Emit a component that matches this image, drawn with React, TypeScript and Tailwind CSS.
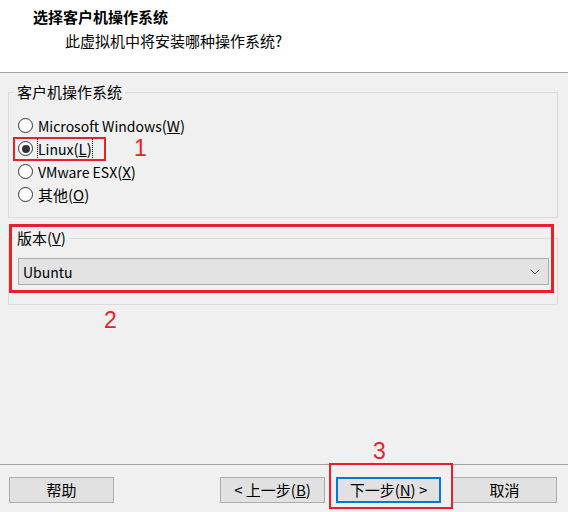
import React from "react"

const font = { fontFamily: '"Noto Sans CJK SC", "Noto Sans", sans-serif' }
const digit = { fontFamily: '"Liberation Sans", sans-serif' }

function Radio({ checked }: { checked?: boolean }) {
    return (
        <span className="flex h-[15px] w-[15px] items-center justify-center rounded-full border border-[#333333] bg-white">
            {checked && <span className="h-[8px] w-[8px] rounded-full bg-[#333333]" />}
        </span>
    )
}

// latin runs of the label are set a bit smaller, closer to the Windows UI font
function Lt({ children }: { children: React.ReactNode }) {
    return <span className="text-[14px]">{children}</span>
}

function Button({ children, primary }: { children: React.ReactNode; primary?: boolean }) {
    return (
        <div
            className={
                "flex h-[26px] w-[105px] items-center justify-center bg-[#e1e1e1] text-[15px] leading-[20px] text-black " +
                (primary ? "border-2 border-[#0078d7]" : "border border-[#adadad]")
            }
        >
            {children}
        </div>
    )
}

export default function App() {
    return (
        <div className="flex h-[512px] w-[568px] flex-col bg-[#f0f0f0] text-black" style={font}>
            {/* header */}
            <div className="h-[73px] border-b border-[#a0a0a0] bg-white pl-[33px] pt-[7px]">
                <div className="text-[15px] font-bold leading-[20px]">选择客户机操作系统</div>
                <div className="mt-[4px] pl-[32px] text-[15px] leading-[20px]">此虚拟机中将安装哪种操作系统?</div>
            </div>

            {/* body */}
            <div className="flex-1 pl-[8px] pr-[10px] text-[15px] leading-[20px]">
                <fieldset className="mt-[9px] border border-[#dcdcdc] pb-[11px] pl-[9px]">
                    <legend className="ml-[-4px] px-[3px]">客户机操作系统</legend>
                    <div className="flex flex-col pt-[12px]">
                        <div className="flex h-[23px] items-center gap-[5px]">
                            <Radio />
                            <span><Lt>Microsoft Windows</Lt>(<u>W</u>)</span>
                        </div>
                        <div className="relative flex h-[23px] items-center gap-[5px]">
                            <Radio checked />
                            <span className="outline outline-1 outline-dotted outline-black"><Lt>Linux</Lt>(<u>L</u>)</span>
                            <span className="pointer-events-none absolute left-[-5px] top-0 h-[24px] w-[93px] border-2 border-[#e8202a]" />
                            <span className="absolute left-[116px] top-[2px] text-[23px] leading-[18px] text-[#e8202a]" style={digit}>1</span>
                        </div>
                        <div className="flex h-[23px] items-center gap-[5px]">
                            <Radio />
                            <span><Lt>VMware ESX</Lt>(<u>X</u>)</span>
                        </div>
                        <div className="flex h-[23px] items-center gap-[5px]">
                            <Radio />
                            <span>其他(<u>O</u>)</span>
                        </div>
                    </div>
                </fieldset>

                <div className="relative mt-[10px]">
                    <fieldset className="border border-[#dcdcdc] pb-[19px] pl-[9px] pr-[8px]">
                        <legend className="ml-[-4px] px-[3px]">版本(<u>V</u>)</legend>
                        <div className="mt-[10px] flex h-[27px] items-center justify-between border border-[#adadad] bg-[#e3e3e3] pl-[4px] pr-[8px]">
                            <Lt>Ubuntu</Lt>
                            <svg width="10" height="6" viewBox="0 0 10 6" fill="none" stroke="#555" strokeWidth="1">
                                <path d="M0.5 0.5 L5 5 L9.5 0.5" />
                            </svg>
                        </div>
                    </fieldset>
                    <span className="pointer-events-none absolute left-[1px] right-[4px] top-[-4px] bottom-[12px] border-[3px] border-[#e8202a]" />
                    <span className="absolute left-[96px] top-[83px] text-[23px] leading-[18px] text-[#e8202a]" style={digit}>2</span>
                </div>
            </div>

            {/* footer */}
            <div className="flex h-[48px] items-start justify-between border-t border-[#a0a0a0] pl-[9px] pr-[11px] pt-[12px]">
                <Button>帮助</Button>
                <div className="flex gap-[11px]">
                    <Button>&lt; 上一步(<u>B</u>)</Button>
                    <div className="relative">
                        <Button primary>下一步(<u>N</u>) &gt;</Button>
                        <span className="pointer-events-none absolute left-[-7px] top-[-14px] h-[46px] w-[124px] border-2 border-[#e8202a]" />
                        <span className="absolute left-[37px] top-[-35px] text-[23px] leading-[18px] text-[#e8202a]" style={digit}>3</span>
                    </div>
                    <Button>取消</Button>
                </div>
            </div>
        </div>
    )
}
